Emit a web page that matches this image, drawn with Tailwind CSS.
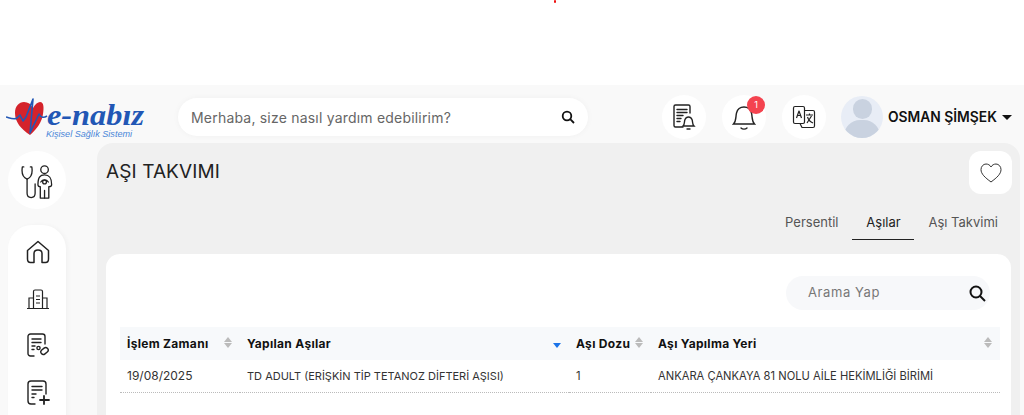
<!DOCTYPE html>
<html lang="en">
<head>
  <meta charset="UTF-8" />
  <title>Aşı Takvimi</title>
  <script src="https://cdn.jsdelivr.net/npm/@tailwindcss/browser@4"></script>
</head>
<body class="w-[1024px] h-[415px] overflow-hidden bg-white font-['Inter',sans-serif] text-[#222]">

  <!-- loader dot -->
  <div class="h-[85px] flex justify-center">
    <div class="w-[2px] h-[3px] bg-[#e11] rounded-full ml-[85px]"></div>
  </div>

  <div class="h-[330px] bg-[#f9f9f9] overflow-hidden">
    <!-- Header -->
    <header class="h-[58px] pt-[6px] flex items-center">
      <div class="w-[178px] h-full relative shrink-0">
        <svg class="absolute left-[6px] top-[3px]" width="142" height="48" viewBox="0 0 142 48" fill="none">
          <path d="M24 41C15 35 9 28 9 19C9 12 13 8 18 8C22 8 25 10 27 14C29 10 32 8 34 8C38 8 38 14 37 20C36 28 31 35 24 41Z" fill="#d4232b"/>
          <path d="M0 23C4 24 8 26 11 24L14 21L17 27L20 23L27 5L24 39L33 20C35 24 38 24 41 22" stroke="#2257b5" stroke-width="1.600" stroke-linejoin="round"/>
          <text x="41" y="31" font-family="'Liberation Serif',serif" font-style="italic" font-weight="700" font-size="29" fill="#2257b5" textLength="97" lengthAdjust="spacingAndGlyphs">e-nabız</text>
          <text x="40" y="43" font-family="'Liberation Sans',sans-serif" font-style="italic" font-size="9" fill="#4a86d8" textLength="86" lengthAdjust="spacingAndGlyphs">Kişisel Sağlık Sistemi</text>
        </svg>
      </div>
      <div class="w-[410px] h-[38px] rounded-full bg-white flex items-center pl-[13px] pr-[13px] shadow-[0_0_6px_rgba(0,0,0,0.04)]">
        <span class="flex-1 text-[14px] tracking-[0.2px] text-[#666]">Merhaba, size nasıl yardım edebilirim?</span>
        <svg width="14" height="14" viewBox="0 0 14 14" fill="none" stroke="#111" stroke-width="1.8"><circle cx="6" cy="6" r="4.3"/><path d="M9.2 9.2L13 13"/></svg>
      </div>
      <div class="ml-[74px] w-[44px] h-[44px] rounded-full bg-white flex items-center justify-center">
        <svg width="24" height="28" viewBox="0 0 24 28" fill="none" stroke="#222" stroke-width="1.4" stroke-linecap="round">
          <path d="M11 24H3.500A1.500 1.500 0 0 1 2 22.500V3.500A1.500 1.500 0 0 1 3.500 2H16.500A1.500 1.500 0 0 1 18 3.500V10"/>
          <path d="M5 6.500H15M5 9.500H15M5 12.500H11M5 15.500H9M5 18.500H8"/>
          <path d="M11 23C13 21 12 19 13 16.500C13.700 14.800 15 14 16.500 14C18 14 19.300 14.800 20 16.500C21 19 20 21 22 23Z"/>
          <path d="M15 26H18"/>
        </svg>
      </div>
      <div class="ml-[16px] w-[44px] h-[44px] rounded-full bg-white flex items-center justify-center relative">
        <svg width="24" height="28" viewBox="0 0 24 28" fill="none" stroke="#222" stroke-width="1.4" stroke-linecap="round">
          <path d="M1.500 21C4.500 18 3.500 14 4.500 10C5.500 6 8.500 4 12 4C15.500 4 18.500 6 19.500 10C20.500 14 19.500 18 22.500 21Z"/>
          <path d="M9 25C10.500 26.500 13.500 26.500 15 25"/>
        </svg>
        <span class="absolute right-[1px] top-[1px] w-[18px] h-[18px] rounded-full bg-[#f4434f] text-white text-[9px] flex items-center justify-center">1</span>
      </div>
      <div class="ml-[16px] w-[44px] h-[44px] rounded-full bg-white flex items-center justify-center">
        <svg width="24" height="24" viewBox="0 0 24 24" fill="none" stroke="#222" stroke-width="1.200" stroke-linejoin="round">
          <rect x="1.500" y="1.500" width="11" height="17" rx="1.500"/>
          <path d="M12.500 5.500H21A1.500 1.500 0 0 1 22.500 7V21A1.500 1.500 0 0 1 21 22.500H10L8 18.500"/>
          <path d="M4.500 13L7 6L9.500 13M5.500 10.500H8.500"/>
          <path d="M14 10H21M17.500 8.500V10M15 18L19.500 11M15.500 12C16.500 15 18.500 17 21 18"/>
        </svg>
      </div>
      <div class="ml-[15px] w-[42px] h-[42px] rounded-full bg-[#e8edf6] overflow-hidden relative shrink-0">
        <div class="absolute left-[12px] top-[3px] w-[19px] h-[20px] rounded-full bg-[#c9d2e0]"></div>
        <div class="absolute left-[3px] top-[24px] w-[36px] h-[22px] rounded-t-[16px] bg-[#c9d2e0]"></div>
      </div>
      <span class="ml-[5px] text-[13.800px] font-semibold text-[#111] whitespace-nowrap">OSMAN ŞİMŞEK</span>
      <span class="ml-[5px] w-0 h-0 border-x-[5px] border-x-transparent border-t-[5px] border-t-[#111]"></span>
    </header>

    <div class="flex">
      <!-- Sidebar -->
      <aside class="w-[97px] shrink-0 pl-[8px]">
        <div class="w-[58px] h-[58px] rounded-full bg-white flex items-center justify-center mt-[8px] pt-[3px]">
          <svg width="34" height="36" viewBox="0 0 36 38" fill="none" stroke="#222" stroke-width="1.400" stroke-linecap="round" stroke-linejoin="round">
            <path d="M4 3H2.500C1.500 9 2.500 14 7.500 16C12 14 13.500 9 12.500 3H11"/>
            <path d="M7.500 16V31C7.500 37 16 37 16 31V21"/>
            <circle cx="26" cy="6" r="4"/>
            <path d="M19 22C19 14 21 11.500 26 11.500C31 11.500 33.500 14 33.500 22C33.500 24 31.500 24 30.500 24V36H21.500V24C20.500 24 19 24 19 22Z"/>
            <path d="M26 28V36M22 19C24 16 28 16 30 19"/>
            <circle cx="26" cy="19" r="2"/>
          </svg>
        </div>
        <div class="w-[58px] h-[220px] rounded-t-[24px] bg-white mt-[16px] flex flex-col items-center pt-[15px] pl-[2px] shadow-[2px_0_4px_rgba(0,0,0,0.03)]">
          <svg width="24" height="24" viewBox="0 0 24 24" fill="none" stroke="#222" stroke-width="1.500" stroke-linejoin="round"><path d="M1.500 10.500L12 1.500L22.500 10.500V19C22.500 21.500 21 22.500 19.500 22.500H16V13.500C16 11.500 14.500 10 12 10C9.500 10 8 11.500 8 13.500V22.500H4.500C3 22.500 1.500 21.500 1.500 19Z"/></svg>
          <svg class="mt-[25px]" width="22" height="20" viewBox="0 0 22 20" fill="none" stroke="#222" stroke-width="1.200"><path d="M0 19.500H22M2 19V9H6.500M20 19V9H15.500M6.500 19V2.500C6.500 1.500 7 1 8 1H14C15 1 15.500 1.500 15.500 2.500V19M9 7H13M9 10.500H13M9 14H13"/></svg>
          <svg class="mt-[24px]" width="23" height="24" viewBox="0 0 23 24" fill="none" stroke="#222" stroke-width="1.400" stroke-linecap="round"><path d="M7 23H3.500C2 23 1 22 1 20.500V3.500C1 2 2 1 3.500 1H15.500C17 1 18 2 18 3.500V11"/><path d="M5 6H14M5 9.500H14M5 13H8M5 16.500H7"/><circle cx="11.500" cy="15" r="1.600"/><rect x="13.500" y="15.500" width="8" height="5" rx="2.500" transform="rotate(-40 17.500 18)"/></svg>
          <svg class="mt-[23px]" width="23" height="25" viewBox="0 0 23 25" fill="none" stroke="#222" stroke-width="1.400" stroke-linecap="round"><path d="M8 24H4C2 24 1 23 1 21V4C1 2 2 1 4 1H16C18 1 19 2 19 4V14"/><path d="M5 6.500H15M5 10H15M5 14H9M5 17.500H7"/><path d="M17 16V24M13 20H22" stroke-width="1.800"/></svg>
        </div>
      </aside>

      <!-- Main panel -->
      <main class="w-[923px] h-[272px] rounded-t-[16px] bg-[#f0f0f0] px-[9px]">
        <div class="flex items-start justify-between h-[61px]">
          <h1 class="text-[19px] leading-[28px] mt-[15px] tracking-[0.100px] text-[#222]">AŞI TAKVIMI</h1>
          <button class="w-[43px] h-[43px] mt-[8px] -mr-[1px] rounded-[12px] bg-white flex items-center justify-center">
            <svg width="22" height="20" viewBox="0 0 22 20" fill="none" stroke="#333" stroke-width="1"><path d="M11 19C5 14.500 1 11 1 6.500C1 3.500 3.300 1 6 1C8 1 10 2 11 4C12 2 14 1 16 1C18.700 1 21 3.500 21 6.500C21 11 17 14.500 11 19Z"/></svg>
          </button>
        </div>
        <nav class="flex justify-end h-[50px] text-[13px] text-[#555] pr-[13px]">
          <span class="h-[36px] pt-[2px] px-[14px] flex items-center">Persentil</span>
          <span class="h-[36px] pt-[2px] w-[62px] flex items-center justify-center text-[#222] border-b-[1.500px] border-[#222]">Aşılar</span>
          <span class="h-[36px] pt-[2px] pl-[14px] flex items-center">Aşı Takvimi</span>
        </nav>
        <section class="w-[905px] h-[170px] rounded-t-[14px] bg-white px-[14px] pt-[22px]">
          <div class="flex justify-end">
            <div class="w-[204px] h-[34px] rounded-full bg-[#f7f8fa] flex items-center pl-[22px] pr-[4px] mr-[7px]">
              <span class="flex-1 text-[13px] tracking-[0.600px] text-[#777]">Arama Yap</span>
              <svg width="17" height="17" viewBox="0 0 17 17" fill="none" stroke="#111" stroke-width="2"><circle cx="7" cy="7" r="5.500"/><path d="M11 11L16 16"/></svg>
            </div>
          </div>
          <table class="w-[880px] mt-[17px] border-collapse table-fixed text-[11.200px]">
            <thead>
              <tr class="bg-[#f7f9fb] h-[33px] text-left text-[#111] text-[12px] tracking-[0.300px]">
                <th class="w-[120px] pl-[7px] font-bold relative">İşlem Zamanı
                  <span class="absolute right-[8px] top-[10px] flex flex-col gap-[1px]"><span class="w-0 h-0 border-x-[4px] border-x-transparent border-b-[5px] border-b-[#bbb]"></span><span class="w-0 h-0 border-x-[4px] border-x-transparent border-t-[5px] border-t-[#bbb]"></span></span>
                </th>
                <th class="w-[329px] pl-[7px] font-bold relative">Yapılan Aşılar
                  <span class="absolute right-[8px] top-[16px] w-0 h-0 border-x-[4px] border-x-transparent border-t-[5px] border-t-[#1a73e8]"></span>
                </th>
                <th class="w-[82px] pl-[7px] font-bold relative">Aşı Dozu
                  <span class="absolute right-[8px] top-[10px] flex flex-col gap-[1px]"><span class="w-0 h-0 border-x-[4px] border-x-transparent border-b-[5px] border-b-[#bbb]"></span><span class="w-0 h-0 border-x-[4px] border-x-transparent border-t-[5px] border-t-[#bbb]"></span></span>
                </th>
                <th class="pl-[7px] font-bold relative">Aşı Yapılma Yeri
                  <span class="absolute right-[8px] top-[10px] flex flex-col gap-[1px]"><span class="w-0 h-0 border-x-[4px] border-x-transparent border-b-[5px] border-b-[#bbb]"></span><span class="w-0 h-0 border-x-[4px] border-x-transparent border-t-[5px] border-t-[#bbb]"></span></span>
                </th>
              </tr>
            </thead>
            <tbody>
              <tr class="h-[32px] border-b border-dotted border-[#bbb] text-[#333]">
                <td class="pl-[7px] pt-[1px] text-[12px]">19/08/2025</td>
                <td class="pl-[7px] pt-[1px] whitespace-nowrap text-[11px]">TD ADULT (ERİŞKİN TİP TETANOZ DİFTERİ AŞISI)</td>
                <td class="pl-[7px] pt-[1px]">1</td>
                <td class="pl-[7px] pt-[1px] whitespace-nowrap">ANKARA ÇANKAYA 81 NOLU AİLE HEKİMLİĞİ BİRİMİ</td>
              </tr>
            </tbody>
          </table>
        </section>
      </main>
    </div>
  </div>
</body>
</html>
